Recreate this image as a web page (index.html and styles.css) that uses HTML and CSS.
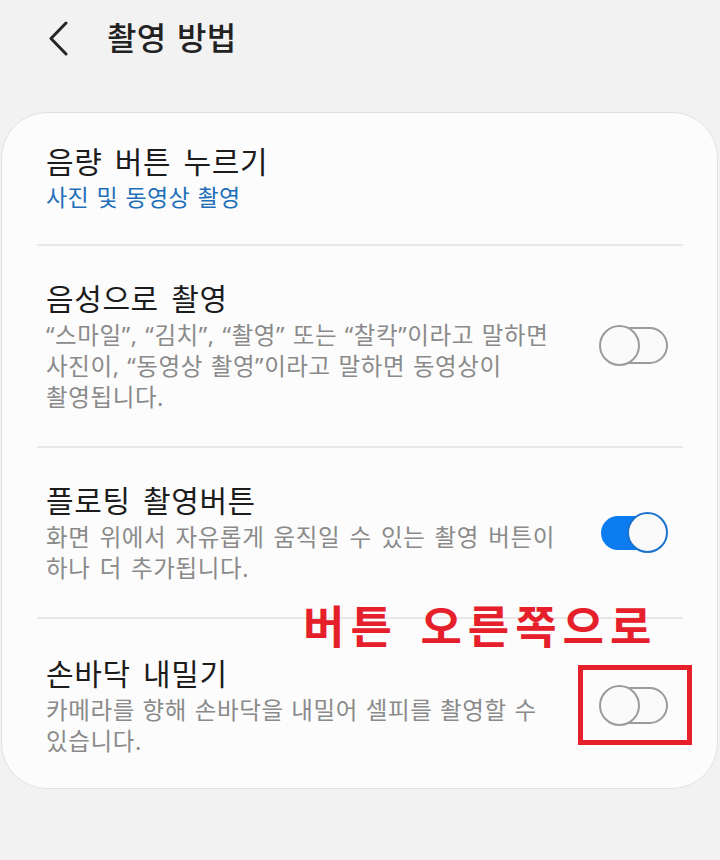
FILE: index.html
```html
<!DOCTYPE html>
<html lang="ko">
<head>
<meta charset="utf-8">
<title>촬영 방법</title>
<link rel="stylesheet" href="styles.css">
</head>
<body>
<div class="screen">
  <header class="topbar">
    <svg class="back" width="24" height="36" viewBox="0 0 24 36" aria-hidden="true">
      <path d="M19 2 L4 17.5 L19 33" fill="none" stroke="#252525" stroke-width="3" stroke-linecap="round" stroke-linejoin="round"/>
    </svg>
    <h1 class="page-title">촬영 방법</h1>
  </header>

  <section class="card">
    <div class="item first">
      <div class="text">
        <div class="title">음량 버튼 누르기</div>
        <div class="sub">사진 및 동영상 촬영</div>
      </div>
    </div>

    <div class="item">
      <div class="text">
        <div class="title">음성으로 촬영</div>
        <div class="desc">“스마일”, “김치”, “촬영” 또는 “찰칵”이라고 말하면<br>사진이, “동영상 촬영”이라고 말하면 동영상이<br>촬영됩니다.</div>
      </div>
      <div class="toggle"><span class="track"></span><span class="thumb"></span></div>
    </div>

    <div class="item">
      <div class="text">
        <div class="title">플로팅 촬영버튼</div>
        <div class="desc wide">화면 위에서 자유롭게 움직일 수 있는 촬영 버튼이<br>하나 더 추가됩니다.</div>
      </div>
      <div class="toggle on"><span class="track"></span><span class="thumb"></span></div>
    </div>

    <div class="item last">
      <div class="text">
        <div class="title">손바닥 내밀기</div>
        <div class="desc">카메라를 향해 손바닥을 내밀어 셀피를 촬영할 수<br>있습니다.</div>
      </div>
      <div class="toggle"><span class="track"></span><span class="thumb"></span><span class="mark-box"></span></div>
      <div class="note">버튼 오른쪽으로</div>
    </div>
  </section>
</div>
</body>
</html>
```

FILE: styles.css
```css
* { box-sizing: border-box; }

html, body {
  margin: 0;
  padding: 0;
  background: #f2f2f2;
}

body {
  font-family: "Noto Sans", "Noto Sans CJK KR", sans-serif;
  color: #1f1f1f;
  width: 720px;
  height: 860px;
  overflow: hidden;
}

.topbar {
  height: 76px;
  display: flex;
  align-items: center;
  padding-left: 47px;
}

.back {
  display: block;
  margin-top: 1px;
}

.page-title {
  margin: 0 0 0 36px;
  font-size: 32px;
  font-weight: 500;
  line-height: 40px;
  color: #222;
  letter-spacing: 0.3px;
  word-spacing: 2px;
}

.card {
  margin: 36px 2px 0 1px;
  background: #fcfcfc;
  border: 1px solid #e1e1e1;
  border-radius: 46px;
  padding: 0 34px 0 35px;
}

.item {
  position: relative;
  display: flex;
  align-items: center;
  padding: 32px 15px 33px 9px;
  border-bottom: 2px solid #e8e8e8;
}

.item.first {
  padding-top: 29px;
  padding-bottom: 32px;
}

.item.last {
  border-bottom: none;
  padding-top: 34px;
  padding-bottom: 31px;
}

.text {
  flex: 1;
  min-width: 0;
}

.title {
  font-size: 30px;
  line-height: 42px;
  color: #1c1c1c;
  letter-spacing: 0.6px;
  word-spacing: 4px;
}

.item.first .title {
  line-height: 40px;
}

.sub {
  font-size: 23px;
  line-height: 30px;
  color: #1e6fba;
  letter-spacing: 0.4px;
  word-spacing: 1px;
}

.desc {
  font-size: 23.5px;
  line-height: 31px;
  color: #8a8a8a;
  letter-spacing: 0.6px;
  word-spacing: 1px;
}

.desc.wide {
  word-spacing: 2.5px;
}

.toggle {
  position: relative;
  width: 69px;
  height: 41px;
  flex: none;
}

.track {
  position: absolute;
  left: 1px;
  right: 0;
  top: 2px;
  height: 37px;
  border: 2px solid #9b9b9b;
  border-radius: 19px;
  background: #fafafa;
}

.thumb {
  position: absolute;
  left: 0;
  top: 0;
  width: 41px;
  height: 41px;
  border-radius: 50%;
  border: 2px solid #9b9b9b;
  background: #fafafa;
}

.toggle.on .track {
  left: 2px;
  right: 6px;
  top: 4px;
  height: 34px;
  border: none;
  background: #0a7cf0;
}

.toggle.on .thumb {
  left: auto;
  right: 0;
  border-color: #1a72cc;
}

.mark-box {
  position: absolute;
  left: -21px;
  top: -20px;
  width: 114px;
  height: 80px;
  border: 5px solid #e6202a;
}

.note {
  position: absolute;
  left: 266px;
  top: -19px;
  font-family: "Noto Sans CJK KR", sans-serif;
  font-size: 45px;
  font-weight: 700;
  line-height: 50px;
  color: #e6202a;
  letter-spacing: 6px;
  word-spacing: 4px;
  white-space: nowrap;
}
```
